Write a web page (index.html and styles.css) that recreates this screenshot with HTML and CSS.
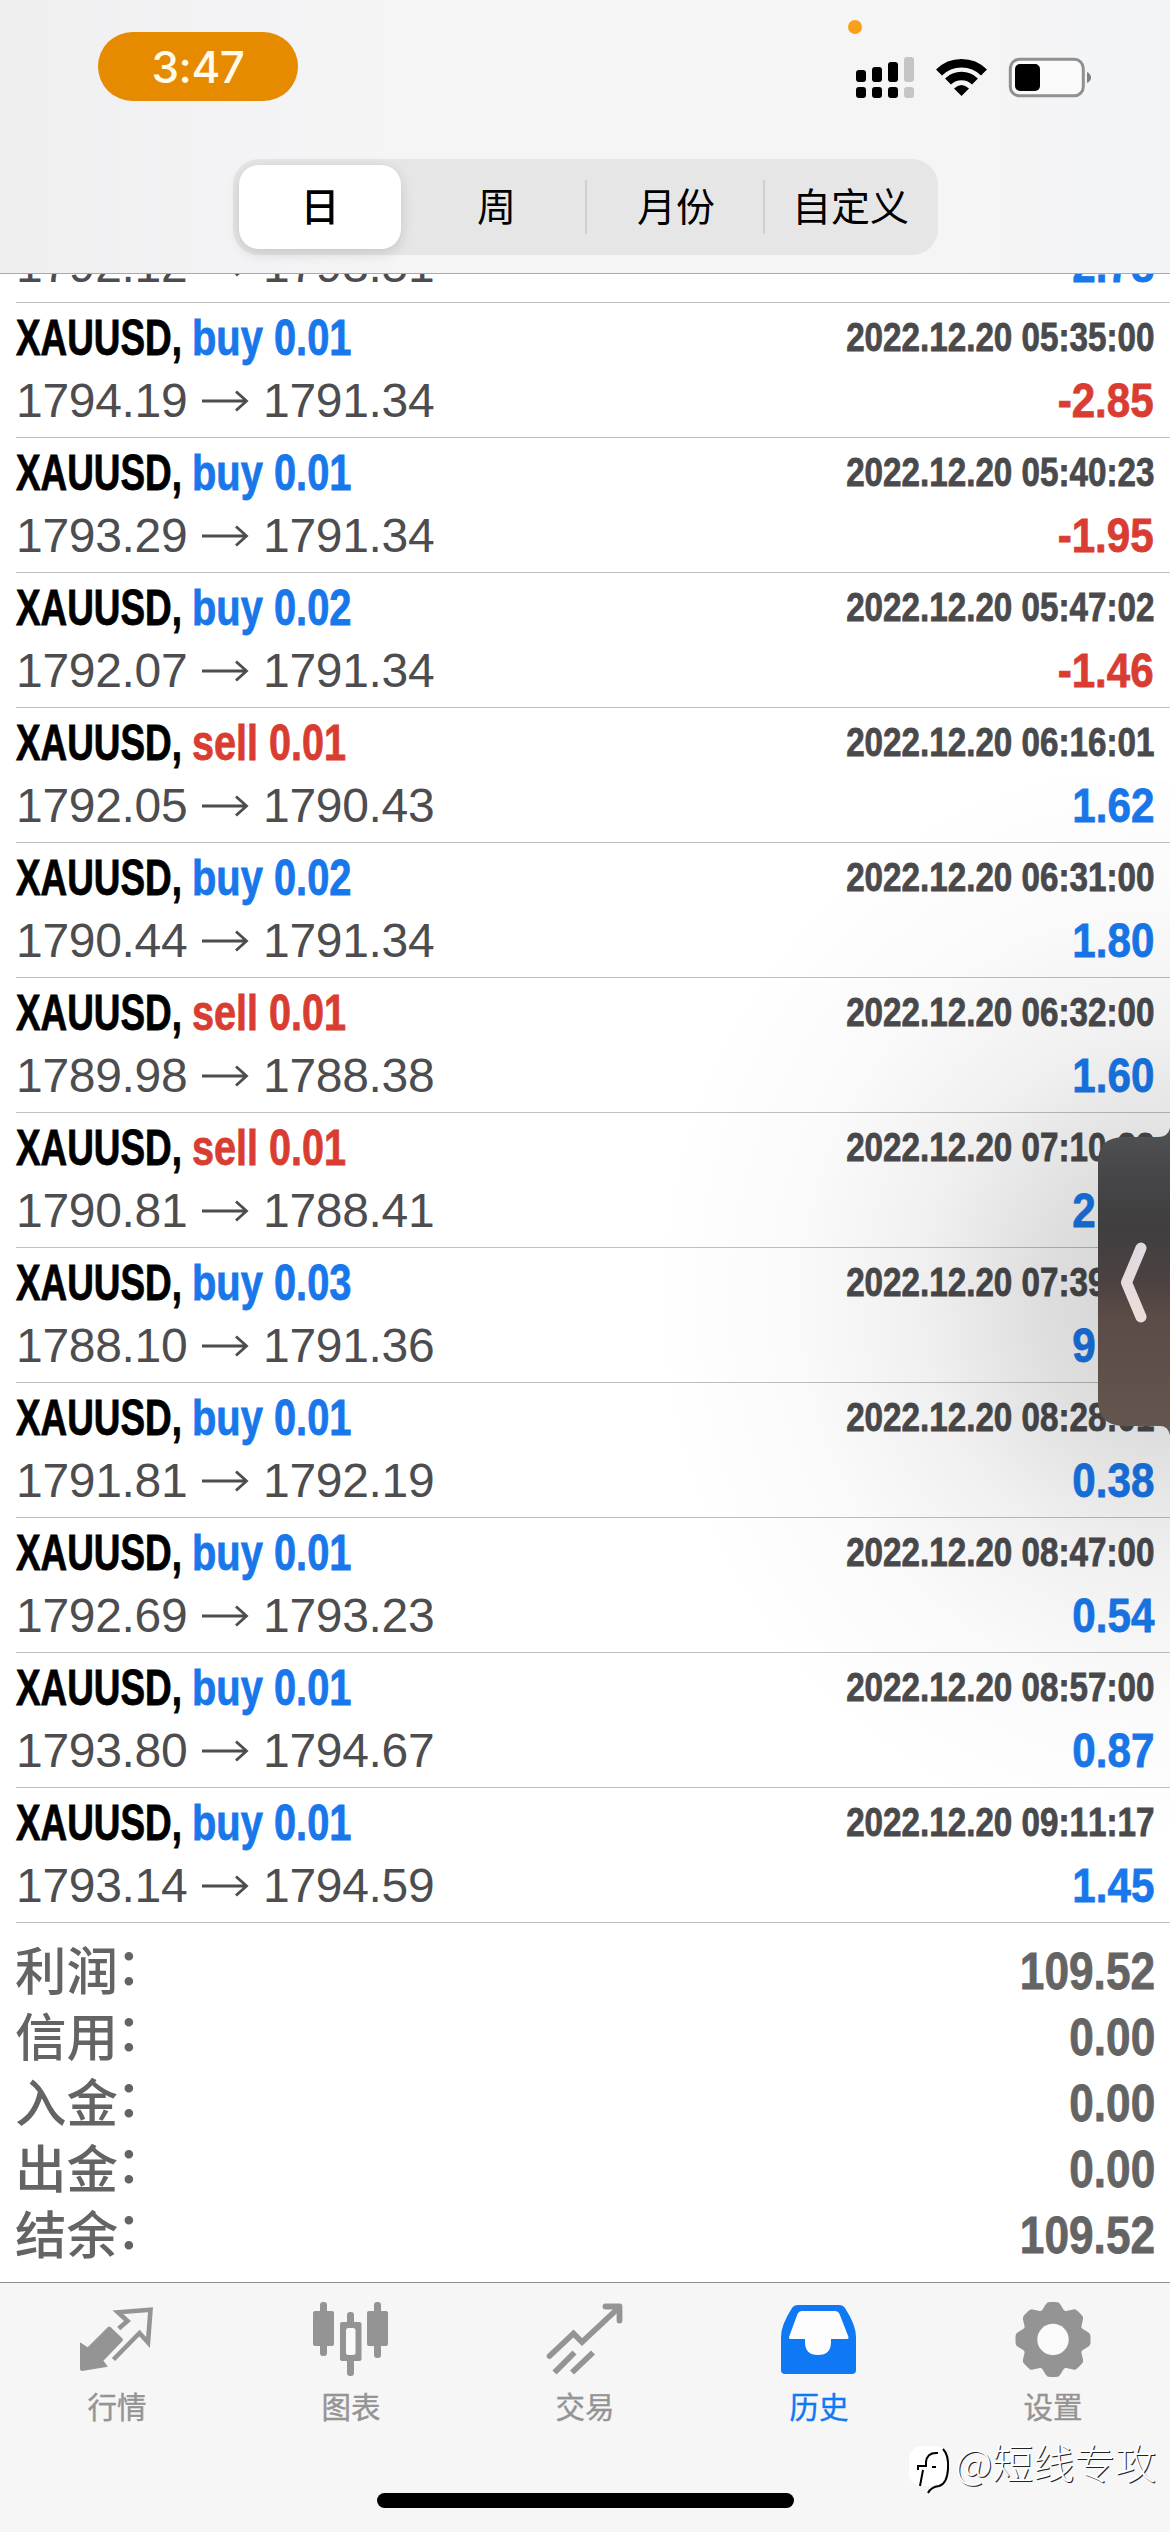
FILE: index.html
```html
<!DOCTYPE html>
<html lang="zh-CN">
<head>
<meta charset="utf-8">
<title>历史</title>
<link rel="stylesheet" href="styles.css">
</head>
<body>
<div class="screen">
  <header class="header">
    <div class="status">
      <div class="clock">3:47</div>
      <svg class="status-icons" width="240" height="90" viewBox="0 0 240 90">
        <circle cx="5" cy="7" r="7" fill="#f9a01b"/>
        <g fill="#000">
          <rect x="6" y="50" width="10" height="12" rx="3"/><rect x="22" y="47" width="10" height="15" rx="3"/><rect x="38" y="42" width="10" height="20" rx="3"/>
          <rect x="6" y="67" width="10" height="11" rx="3"/><rect x="22" y="67" width="10" height="11" rx="3"/><rect x="38" y="67" width="10" height="11" rx="3"/>
        </g>
        <g fill="#c5c5c5"><rect x="54" y="37" width="10" height="25" rx="3"/><rect x="54" y="67" width="10" height="11" rx="3"/></g>
        <g fill="none" stroke="#000" stroke-width="8.500">
          <path d="M89 52.500A32 32 0 0 1 134 52.500"/><path d="M98 61.500A19.500 19.500 0 0 1 125 61.500"/>
        </g>
        <path d="M104 68.500Q111.500 61.500 119 68.500L111.500 76Z" fill="#000"/>
        <rect x="160.300" y="39.300" width="73" height="36.500" rx="9" fill="#fafafa" stroke="#909090" stroke-width="3"/>
        <rect x="165" y="44" width="25" height="27" rx="5" fill="#000"/>
        <path d="M237 52Q241 54 241 57.500T237 63Z" fill="#808080"/>
      </svg>
    </div>
    <nav class="segments">
      <div class="segment selected"><span>日</span></div>
      <div class="segment week"><span>周</span></div>
      <div class="segment divided month"><span>月份</span></div>
      <div class="segment divided"><span>自定义</span></div>
    </nav>
  </header>

  <main class="history">
    <div class="deals" id="deals"></div>
    <dl class="totals">
      <div class="total"><dt>利润<span class="colon">：</span></dt><dd>109.52</dd></div>
      <div class="total"><dt>信用<span class="colon">：</span></dt><dd>0.00</dd></div>
      <div class="total"><dt>入金<span class="colon">：</span></dt><dd>0.00</dd></div>
      <div class="total"><dt>出金<span class="colon">：</span></dt><dd>0.00</dd></div>
      <div class="total"><dt>结余<span class="colon">：</span></dt><dd>109.52</dd></div>
    </dl>
  </main>

  <footer class="tabbar">
    <div class="tabs">
      <div class="tab">
        <svg class="icon" viewBox="0 0 80 80"><path d="M3 43.300L10.700 48.300L31 28Q32.300 27 33.500 28L45.500 39.500Q46.600 40.700 45.500 42L26.400 61.700L30.800 67.700L5 72Q3 72 3 69.700Z" fill="currentColor"/><path d="M41.700 29.500L50.500 22L41 13.300L73.500 10.700L71 43.500L62.500 34L36.500 60.500" fill="none" stroke="currentColor" stroke-width="4.600"/></svg>
        <span>行情</span>
      </div>
      <div class="tab">
        <svg class="icon" viewBox="0 0 80 80"><g fill="currentColor"><rect x="2" y="12" width="21" height="35" rx="2"/><rect x="9" y="3" width="7" height="54" rx="3"/><rect x="56" y="12" width="21" height="35" rx="2"/><rect x="63" y="3" width="7" height="56" rx="3"/><rect x="29" y="23" width="21.500" height="39" rx="2"/><rect x="36" y="13" width="7" height="64" rx="3"/></g><rect x="35" y="29" width="9.500" height="27" rx="2.500" fill="#fafafa"/></svg>
        <span>图表</span>
      </div>
      <div class="tab">
        <svg class="icon" viewBox="0 0 80 80"><g fill="none" stroke="currentColor" stroke-width="5.800"><path stroke-linecap="round" d="M4.600 57L28.500 34.500L37 43L74 8.500"/><path stroke-linecap="round" stroke-linejoin="round" d="M60.500 7.500H74.500V21.500"/><path d="M9.500 73.500L29.500 53.500M27 73.500L48 53.500"/></g></svg>
        <span>交易</span>
      </div>
      <div class="tab active">
        <svg class="icon" viewBox="0 0 80 80"><path d="M19 6H60Q64 6 66 9Q77 26 77 38V71Q77 75 73 75H6Q2 75 2 71V38Q2 26 13 9Q15 6 19 6Z" fill="currentColor"/><path d="M23 12H56Q59 12 60.500 15L69.500 38Q70 40 68 40H52V43Q52 56 39 56T26 43V40H11.500Q9.500 40 10 38L18.500 15Q20 12 23 12Z" fill="#fdfdfd"/></svg>
        <span>历史</span>
      </div>
      <div class="tab">
        <svg class="icon" viewBox="0 0 80 80"><g fill="currentColor"><circle cx="40" cy="40.500" r="31"/><g id="teeth"><path id="tooth" d="M28 13L33 5Q34 3 37 3H43Q46 3 47 5L52 13Z"/><use href="#tooth" transform="rotate(45 40 40.500)"/><use href="#tooth" transform="rotate(90 40 40.500)"/><use href="#tooth" transform="rotate(135 40 40.500)"/></g><use href="#teeth" transform="rotate(180 40 40.500)"/></g><circle cx="40" cy="40.500" r="15.700" fill="#fafafa"/></svg>
        <span>设置</span>
      </div>
    </div>
    <div class="home-indicator"></div>
  </footer>

  <div class="drawer-shade"></div>
  <svg class="drawer" width="72" height="307" viewBox="0 0 72 307">
    <defs>
      <linearGradient id="slab" x1="0" y1="0" x2="0" y2="1"><stop offset="0" stop-color="#515254"/><stop offset=".14" stop-color="#474749"/><stop offset=".32" stop-color="#403e3f"/><stop offset=".5" stop-color="#4c4241"/><stop offset=".62" stop-color="#5c4b46"/><stop offset="1" stop-color="#65564f"/></linearGradient>
      <linearGradient id="glint" x1="0" y1="0" x2="0" y2="1"><stop offset="0" stop-color="#dedbe0"/><stop offset="1" stop-color="#eedcda"/></linearGradient>
    </defs>
    <path d="M72 0Q70 9 60 9H26Q0 9 0 35V272Q0 298 26 298H62Q70 298 72 307Z" fill="url(#slab)"/>
    <path d="M43 120L28.500 154.500L43 189" fill="none" stroke="url(#glint)" stroke-width="11" stroke-linecap="round" stroke-linejoin="round"/>
  </svg>
  <div class="watermark">
    <svg width="46" height="54" viewBox="0 0 46 54"><rect x="2" y="4" width="38" height="40" rx="13" fill="#fff"/><path d="M36 7Q42 13 41 27Q40 42 32 44Q24 45 21 51" fill="none" stroke="#000" stroke-width="2"/><path d="M31 11Q20 10 19 20V24H11V28M16 28L13 44M25 25H29" fill="none" stroke="#000" stroke-width="2"/></svg>
    <span>@短线专攻</span>
  </div>
</div>
<script src="deals.js"></script>
</body>
</html>
```
FILE: deals.js
```js
const deals = [
  ["buy", "0.02", "05:21:00", "1792.12", "1793.51", "2.78"],
  ["buy", "0.01", "05:35:00", "1794.19", "1791.34", "-2.85"],
  ["buy", "0.01", "05:40:23", "1793.29", "1791.34", "-1.95"],
  ["buy", "0.02", "05:47:02", "1792.07", "1791.34", "-1.46"],
  ["sell", "0.01", "06:16:01", "1792.05", "1790.43", "1.62"],
  ["buy", "0.02", "06:31:00", "1790.44", "1791.34", "1.80"],
  ["sell", "0.01", "06:32:00", "1789.98", "1788.38", "1.60"],
  ["sell", "0.01", "07:10:33", "1790.81", "1788.41", "2.40"],
  ["buy", "0.03", "07:39:00", "1788.10", "1791.36", "9.78"],
  ["buy", "0.01", "08:28:01", "1791.81", "1792.19", "0.38"],
  ["buy", "0.01", "08:47:00", "1792.69", "1793.23", "0.54"],
  ["buy", "0.01", "08:57:00", "1793.80", "1794.67", "0.87"],
  ["buy", "0.01", "09:11:17", "1793.14", "1794.59", "1.45"]
];
document.getElementById("deals").innerHTML = deals.map(([side, lots, time, open, close, profit]) => `
  <article class="deal">
    <div class="line">
      <div class="symbol"><span>XAUUSD,</span></div>
      <div class="side ${side}"><span>${side} ${lots}</span></div>
      <time class="time">2022.12.20 ${time}</time>
    </div>
    <div class="line">
      <div class="price">${open}</div>
      <svg class="arrow" width="48" height="24" viewBox="0 0 48 24"><path d="M1 12H45M35 2.500L45.500 12L35 21.500" fill="none" stroke="currentColor" stroke-width="2.800"/></svg>
      <div class="price">${close}</div>
      <div class="profit ${profit.startsWith("-") ? "loss" : "gain"}">${profit}</div>
    </div>
  </article>`).join("");
```
FILE: styles.css
```css
* { box-sizing: border-box; }
body { margin: 0; background: #fff; font-family: "Liberation Sans", "Noto Sans CJK SC", sans-serif; font-kerning: none; }
.screen { position: relative; width: 1170px; height: 2532px; overflow: hidden; display: flex; flex-direction: column; }

.header { height: 274px; flex: none; border-bottom: 1px solid #a9a9ab; background: linear-gradient(90deg, #efeff0, #f3f3f5 20%, #f5f5f5 35%, #f5f5f5 80%, #f3f4f7); }
.status { height: 159px; padding: 20px 0 0 98px; display: flex; align-items: flex-start; }
.clock { width: 200px; height: 69px; margin-top: 12px; border-radius: 35px; background: #e68a00; color: #fffbe8; font: 500 44px/70px Inter, sans-serif; letter-spacing: -.5px; text-align: center; }
.status-icons { margin-left: 552px; flex: none; overflow: visible; }
.segments { width: 705px; height: 96px; margin-left: 233px; padding: 6px 0 6px 6px; display: grid; grid-template-columns: 162px 184px 178px 1fr; border-radius: 26px; background: #e6e6e7; }
.segment { display: flex; align-items: center; justify-content: center; color: #000; font: 400 39px/56px "Noto Sans CJK SC", sans-serif; }
.segment span { margin-bottom: 6px; }
.selected { border-radius: 20px; background: #fff; font-weight: 500; box-shadow: 0 4px 14px rgba(0, 0, 0, .14); }
.week { padding-left: 7px; }
.divided { background: linear-gradient(#d0d0d2, #d0d0d2) 0 15px / 2px 54px no-repeat; }
.month { padding-left: 4px; }

.history { height: 2008px; flex: none; overflow: hidden; }
.deals { margin: -106px 0 0 16px; }
.deal { height: 135px; padding: 3px 16px 0 0; border-bottom: 1px solid #c0c0c2; }
.line { height: 63px; display: flex; align-items: center; line-height: 63px; white-space: nowrap; }
.symbol, .side, .time, .profit, .total dd { -webkit-text-stroke: .8px currentColor; }
.symbol { width: 176px; font-size: 49.500px; font-weight: 700; color: #000; }
.symbol span, .side span { display: inline-block; transform-origin: left center; }
.symbol span { transform: scaleX(.745); }
.side { width: 162px; font-size: 49.500px; font-weight: 700; }
.side span { transform: scaleX(.805); }
.side.sell span { transform: scaleX(.8); }
.side.buy, .gain { color: #1877ea; }
.side.sell, .loss { color: #d93d32; }
.time { margin-left: auto; font-size: 40px; font-weight: 700; color: #4a4a4c; transform: scaleX(.83); transform-origin: right center; }
.price { width: 174px; font-size: 48px; letter-spacing: -.3px; color: #4d4d4f; }
.arrow { margin: 0 14px 0 11px; flex: none; color: #4d4d4f; }
.profit { margin-left: auto; font-size: 49px; font-weight: 700; transform: scaleX(.86); transform-origin: right center; }

.totals { margin: 0; padding: 15px 15px 0 15px; }
.total { height: 66px; display: flex; justify-content: space-between; align-items: center; color: #646464; }
.total dt { margin-bottom: 6px; font: 500 51.500px/60px "Noto Sans CJK SC", sans-serif; }
.colon { position: relative; top: -5px; left: -2px; }
.total dd { margin: 0; font-size: 52px; font-weight: 700; line-height: 66px; transform: scaleX(.85); transform-origin: right center; }

.tabbar { height: 250px; flex: none; border-top: 1px solid #8f8f91; background: #f6f6f6; }
.tabs { height: 210px; padding-top: 16px; display: grid; grid-template-columns: repeat(5, 1fr); }
.tab { display: flex; flex-direction: column; align-items: center; color: #949494; }
.tab span { margin-top: 6px; font: 400 29.500px/40px "Noto Sans CJK SC", sans-serif; -webkit-text-stroke: .4px currentColor; }
.tab.active { color: #0f79f5; }
.icon { width: 80px; height: 80px; }
.home-indicator { width: 417px; height: 15px; margin: 0 auto; border-radius: 8px; background: #000; }

.drawer-shade { position: absolute; right: 0; top: 780px; width: 560px; height: 1100px; background: radial-gradient(ellipse 520px 550px at 560px 520px, rgba(0, 0, 0, .18), rgba(0, 0, 0, .13) 25%, rgba(0, 0, 0, .06) 48%, rgba(0, 0, 0, .02) 72%, transparent); }
.drawer { position: absolute; right: 0; top: 1128px; }
.watermark { position: absolute; left: 907px; top: 2442px; display: flex; align-items: flex-start; color: #fff; font: 300 41px/48px "Noto Sans CJK SC", sans-serif; text-shadow: 1px 1px 0 #222; white-space: nowrap; }
.watermark span { margin: -5px 0 0 2px; }
```
